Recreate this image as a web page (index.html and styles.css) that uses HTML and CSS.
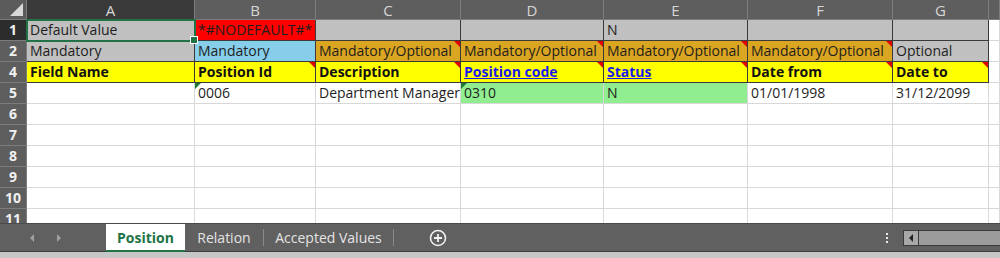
FILE: index.html
```html
<!DOCTYPE html>
<html lang="en">
<head>
  <meta charset="UTF-8" />
  <title>Position - Sheet</title>
  <link rel="stylesheet" href="styles.css">
</head>
<body>

  <!-- grade da planilha -->
  <div class="sheet">
    <div class="corner"><span class="corner-tri"></span></div>
    <div class="colhead sel">A</div>
    <div class="colhead">B</div>
    <div class="colhead">C</div>
    <div class="colhead">D</div>
    <div class="colhead">E</div>
    <div class="colhead">F</div>
    <div class="colhead">G</div>
    <div class="colhead"></div>

    <!-- linha 1 -->
    <div class="rowhead sel">1</div>
    <div class="cell gray boxed selected">Default Value<span class="handle"></span></div>
    <div class="cell red boxed">*#NODEFAULT#*</div>
    <div class="cell gray boxed"></div>
    <div class="cell gray boxed"></div>
    <div class="cell gray boxed">N</div>
    <div class="cell gray boxed"></div>
    <div class="cell gray boxed"></div>
    <div class="cell"></div>

    <!-- linha 2 -->
    <div class="rowhead">2</div>
    <div class="cell gray boxed">Mandatory</div>
    <div class="cell blue boxed">Mandatory</div>
    <div class="cell orange boxed note">Mandatory/Optional</div>
    <div class="cell orange boxed note">Mandatory/Optional</div>
    <div class="cell orange boxed note">Mandatory/Optional</div>
    <div class="cell orange boxed note">Mandatory/Optional</div>
    <div class="cell gray boxed">Optional</div>
    <div class="cell"></div>

    <!-- linha 4 -->
    <div class="rowhead">4</div>
    <div class="cell yellow boxed bold">Field Name</div>
    <div class="cell yellow boxed bold note">Position Id</div>
    <div class="cell yellow boxed bold note">Description</div>
    <div class="cell yellow boxed bold note"><span class="link">Position code</span></div>
    <div class="cell yellow boxed bold note"><span class="link">Status</span></div>
    <div class="cell yellow boxed bold note">Date from</div>
    <div class="cell yellow boxed bold note">Date to</div>
    <div class="cell"></div>

    <!-- linha 5 -->
    <div class="rowhead">5</div>
    <div class="cell"></div>
    <div class="cell warn">0006</div>
    <div class="cell">Department Manager</div>
    <div class="cell green warn">0310</div>
    <div class="cell green">N</div>
    <div class="cell">01/01/1998</div>
    <div class="cell">31/12/2099</div>
    <div class="cell"></div>

    <div class="rowhead">6</div>
    <div class="cell"></div><div class="cell"></div><div class="cell"></div><div class="cell"></div><div class="cell"></div><div class="cell"></div><div class="cell"></div><div class="cell"></div>
    <div class="rowhead">7</div>
    <div class="cell"></div><div class="cell"></div><div class="cell"></div><div class="cell"></div><div class="cell"></div><div class="cell"></div><div class="cell"></div><div class="cell"></div>
    <div class="rowhead">8</div>
    <div class="cell"></div><div class="cell"></div><div class="cell"></div><div class="cell"></div><div class="cell"></div><div class="cell"></div><div class="cell"></div><div class="cell"></div>
    <div class="rowhead">9</div>
    <div class="cell"></div><div class="cell"></div><div class="cell"></div><div class="cell"></div><div class="cell"></div><div class="cell"></div><div class="cell"></div><div class="cell"></div>
    <div class="rowhead">10</div>
    <div class="cell"></div><div class="cell"></div><div class="cell"></div><div class="cell"></div><div class="cell"></div><div class="cell"></div><div class="cell"></div><div class="cell"></div>
    <div class="rowhead">11</div>
    <div class="cell"></div><div class="cell"></div><div class="cell"></div><div class="cell"></div><div class="cell"></div><div class="cell"></div><div class="cell"></div><div class="cell"></div>
  </div>

  <!-- abas das folhas -->
  <div class="tabbar">
    <div class="nav">
      <span class="arrow left"></span>
      <span class="arrow right"></span>
    </div>
    <div class="tab active">Position</div>
    <div class="tab relation">Relation</div>
    <div class="tab accepted">Accepted Values</div>
    <div class="add">
      <svg width="18" height="18" viewBox="0 0 18 18">
        <circle cx="9" cy="9" r="7.5" fill="none" stroke="#f2f2f2" stroke-width="1.6"/>
        <path d="M9 5v8M5 9h8" stroke="#f2f2f2" stroke-width="1.8"/>
      </svg>
    </div>
    <div class="spacer"></div>
    <div class="dots"><span></span><span></span><span></span></div>
    <div class="hscroll">
      <div class="scroll-btn"><span class="scroll-tri"></span></div>
      <div class="scroll-track"></div>
    </div>
  </div>
  <div class="status"></div>

</body>
</html>
```

FILE: styles.css
```css
body {
  margin: 0;
  width: 1000px;
  height: 258px;
  overflow: hidden;
  background: #ffffff;
  font-family: "Open Sans", Arial, sans-serif;
  font-size: 14px;
  color: #1e1e1e;
}

.sheet {
  display: grid;
  grid-template-columns: 27px 168px 121px 145px 143px 144px 145px 96px 11px;
  grid-template-rows: 20px;
  grid-auto-rows: 21px;
  height: 223px;
  overflow: hidden;
}

.corner {
  background: #5b5b5b;
  border-right: 1px solid #7a7a7a;
  border-bottom: 1px solid #7a7a7a;
  position: relative;
}

.corner-tri {
  position: absolute;
  right: 3px;
  bottom: 3px;
  width: 0;
  height: 0;
  border-left: 13px solid transparent;
  border-bottom: 13px solid #d8d8d8;
}

.colhead {
  background: #5e5e5e;
  color: #d6d6d6;
  font-size: 15px;
  text-align: center;
  line-height: 20px;
  border-right: 1px solid #7c7c7c;
  border-bottom: 1px solid #7c7c7c;
  box-sizing: border-box;
}

.colhead.sel {
  background: #3a3a3a;
}

.rowhead {
  background: #5e5e5e;
  color: #f0f0f0;
  font-weight: bold;
  text-align: center;
  line-height: 20px;
  border-right: 1px solid #7c7c7c;
  border-bottom: 1px solid #7c7c7c;
  box-sizing: border-box;
}

.rowhead.sel {
  background: #2c2c2c;
}

.cell {
  position: relative;
  box-sizing: border-box;
  border-right: 1px solid #d8d8d8;
  border-bottom: 1px solid #d8d8d8;
  padding: 0 3px;
  line-height: 20px;
  white-space: nowrap;
  overflow: hidden;
}

.cell.boxed {
  border-right-color: #3a3a3a;
  border-bottom-color: #3a3a3a;
  overflow: visible;
}

.gray { background: #c0c0c0; }
.red { background: #ff0000; }
.blue { background: #87ceeb; }
.orange { background: #daa520; }
.yellow { background: #ffff00; }
.green { background: #90ee90; }

.bold {
  font-weight: bold;
  color: #111;
}

.link {
  color: #1a1aee;
  text-decoration: underline;
}

.selected {
  outline: 2px solid #217346;
  outline-offset: -1px;
  z-index: 2;
}

.handle {
  position: absolute;
  right: -4px;
  bottom: -4px;
  width: 6px;
  height: 6px;
  background: #217346;
  border: 1px solid #ffffff;
}

/* indicador de comentario */
.note::after {
  content: "";
  position: absolute;
  top: 0;
  right: 0;
  border-left: 6px solid transparent;
  border-top: 6px solid #e00000;
}

/* numero como texto */
.warn::before {
  content: "";
  position: absolute;
  top: 0;
  left: 0;
  border-right: 6px solid transparent;
  border-top: 6px solid #1e7b34;
}

.tabbar {
  display: flex;
  background: #606060;
  border-top: 1px solid #4a4a4a;
  border-bottom: 1px solid #3e3e3e;
  box-sizing: border-box;
  height: 29px;
  color: #e4e4e4;
}

.nav {
  width: 106px;
  display: flex;
  align-items: center;
  gap: 23px;
  padding-left: 30px;
  box-sizing: border-box;
}

.arrow {
  width: 0;
  height: 0;
  border-top: 4px solid transparent;
  border-bottom: 4px solid transparent;
}

.arrow.left { border-right: 4px solid #a0a0a0; }
.arrow.right { border-left: 4px solid #a0a0a0; }

.tab {
  display: flex;
  align-items: center;
  justify-content: center;
  box-sizing: border-box;
  font-weight: 500;
}

.tab.active {
  width: 79px;
  background: #ffffff;
  color: #217346;
  font-weight: bold;
  border-bottom: 2px solid #217346;
  margin-bottom: -1px;
}

.tab.relation {
  width: 79px;
  border-right: 1px solid #8a8a8a;
  margin: 5px 0;
}

.tab.accepted {
  width: 130px;
  border-right: 1px solid #8a8a8a;
  margin: 5px 0;
}

.add {
  display: flex;
  align-items: center;
  margin-left: 35px;
}

.spacer {
  flex: 1;
}

.dots {
  display: flex;
  flex-direction: column;
  justify-content: center;
  gap: 2px;
  margin-right: 15px;
}

.dots span {
  width: 2px;
  height: 2px;
  background: #e8e8e8;
}

.hscroll {
  width: 97px;
  display: flex;
  align-items: center;
}

.scroll-btn {
  width: 16px;
  height: 16px;
  box-sizing: border-box;
  background: #a8a8a8;
  border: 1px solid #3a3a3a;
  display: flex;
  align-items: center;
  justify-content: center;
}

.scroll-tri {
  width: 0;
  height: 0;
  border-top: 4px solid transparent;
  border-bottom: 4px solid transparent;
  border-right: 4px solid #222;
}

.scroll-track {
  flex: 1;
  height: 16px;
  box-sizing: border-box;
  background: #9c9c9c;
  border-top: 1px solid #3a3a3a;
  border-bottom: 1px solid #3a3a3a;
}

.status {
  height: 6px;
  background: #c6c6c6;
}
```
